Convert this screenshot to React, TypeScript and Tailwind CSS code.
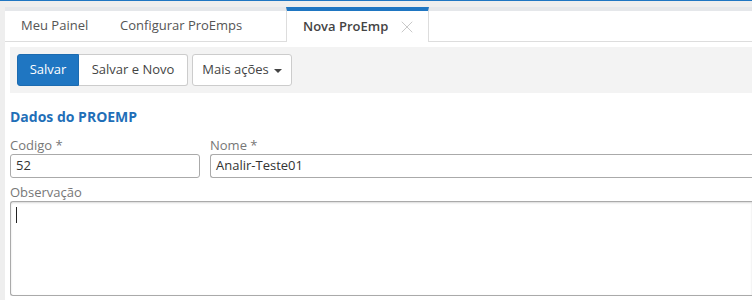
import { X } from "lucide-react";

export default function App() {
  return (
    <div className="w-[752px] h-[300px] overflow-hidden bg-[#eeeeee] font-['Open_Sans',sans-serif] text-[13px] text-[#333]">
      <div className="h-px bg-[#1f76c2]" />
      <div className="pt-[6px] pl-[5px] h-[299px]">
        <div className="bg-white h-full">
          {/* tabs */}
          <div className="flex h-[35px]">
            <div className="w-[99px] shrink-0 border-t-4 border-b border-t-[#e5e7ea] border-b-[#dddddd] pl-4 flex items-center text-[#555]">
              Meu Painel
            </div>
            <div className="w-[182px] shrink-0 border-t-4 border-b border-t-[#e5e7ea] border-b-[#dddddd] pl-4 flex items-center text-[#555]">
              Configurar ProEmps
            </div>
            <div className="w-[143px] shrink-0 border-t-4 border-t-[#1f76c2] border-x border-x-[#dddddd] pl-4 pr-[11px] flex items-center justify-between font-semibold text-[#444]">
              <span>Nova ProEmp</span>
              <X size={20} strokeWidth={1.1} className="text-[#c4c4c4]" />
            </div>
            <div className="flex-1 border-t-4 border-b border-t-[#e5e7ea] border-b-[#dddddd]" />
          </div>

          {/* toolbar */}
          <div className="mt-[5px] ml-[5px] h-[46px] bg-[#f3f3f3] pt-[7px] pl-[7px] flex gap-[4px] items-start">
            <div className="flex h-[32px]">
              <button className="w-[62px] bg-[#1f76c2] border border-[#1c6bb0] rounded-l-[3px] text-white">
                Salvar
              </button>
              <button className="w-[109px] bg-white border border-l-0 border-[#cccccc] rounded-r-[3px] text-[#444]">
                Salvar e Novo
              </button>
            </div>
            <button className="h-[32px] w-[100px] bg-white border border-[#cccccc] rounded-[3px] text-[#444] flex items-center justify-center gap-[5px]">
              Mais ações
              <span className="w-0 h-0 border-x-[4px] border-x-transparent border-t-[4px] border-t-[#444] mt-px" />
            </button>
          </div>

          {/* form */}
          <div className="pl-[5px] pt-[14px]">
            <h2 className="text-[14px] font-bold text-[#1f6fb8] leading-[20px]">Dados do PROEMP</h2>
            <div className="flex gap-[10px] mt-[10px]">
              <div className="w-[190px] shrink-0">
                <div className="text-[#777] leading-[17px]">Codigo *</div>
                <div className="h-[24px] border border-[#aaaaaa] rounded-[3px] px-[5px] flex items-center text-[#333]">52</div>
              </div>
              <div className="flex-1">
                <div className="text-[#777] leading-[17px]">Nome *</div>
                <div className="h-[24px] border border-r-0 border-[#aaaaaa] rounded-l-[3px] px-[5px] flex items-center text-[#333]">Analir-Teste01</div>
              </div>
            </div>
            <div className="mt-[6px] text-[#777] leading-[17px]">Observação</div>
            <div className="h-[95px] border border-r-0 border-[#aaaaaa] rounded-l-[3px] shadow-[inset_0_1px_2px_rgba(0,0,0,0.15)] pt-[5px] pl-[5px]">
              <div className="w-px h-[16px] bg-[#222]" />
            </div>
          </div>
        </div>
      </div>
    </div>
  );
}
